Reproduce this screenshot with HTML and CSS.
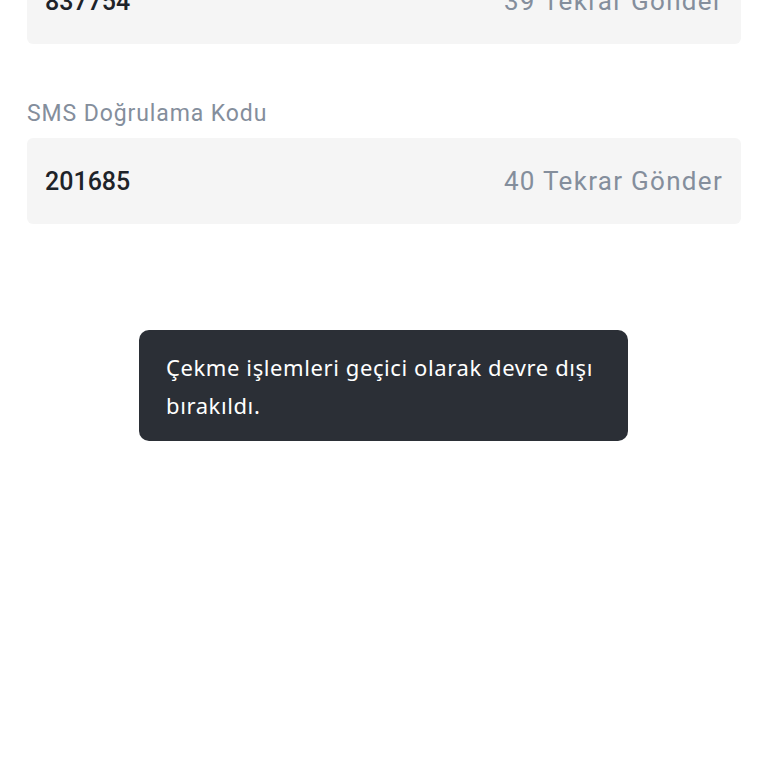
FILE: index.html
```html
<!DOCTYPE html>
<html>
  <head>
    <meta charset="UTF-8" />
    <title>Güvenlik Doğrulaması</title>
    <link rel="stylesheet" href="styles.css">
  </head>
  <body>
    <div class="page">
      <div class="field field-first">
        <div class="code-box">
          <span class="code">837754</span>
          <span class="resend">39 Tekrar Gönder</span>
        </div>
      </div>
      <div class="field">
        <label class="field-label">SMS Doğrulama Kodu</label>
        <div class="code-box">
          <span class="code">201685</span>
          <span class="resend">40 Tekrar Gönder</span>
        </div>
      </div>
    </div>
    <div class="toast">Çekme işlemleri geçici olarak devre dışı bırakıldı.</div>
  </body>
</html>
```

FILE: styles.css
```css
body {
  margin: 0;
  background-color: #fff;
  font-family: Roboto, "Noto Sans", sans-serif;
}

.page {
  padding: 0 27px;
  margin-top: -42px;
}

.field-first {
  margin-bottom: 56px;
}

.field-label {
  display: block;
  font-size: 23px;
  line-height: 28px;
  letter-spacing: 0.9px;
  color: #848e9c;
  margin-bottom: 10px;
}

.code-box {
  display: flex;
  align-items: center;
  justify-content: space-between;
  height: 86px;
  padding: 0 18px;
  background-color: #f5f5f5;
  border-radius: 6px;
}

.code {
  font-size: 25px;
  font-weight: 500;
  color: #1e2329;
}

.resend {
  font-size: 26px;
  letter-spacing: 1.3px;
  color: #848e9c;
}

.toast {
  position: absolute;
  left: 139px;
  top: 330px;
  width: 435px;
  padding: 18px 27px 17px;
  background-color: #2b2f36;
  border-radius: 10px;
  color: #fff;
  font-family: "Noto Sans", sans-serif;
  font-size: 22px;
  letter-spacing: 0.6px;
  line-height: 38px;
}
```
